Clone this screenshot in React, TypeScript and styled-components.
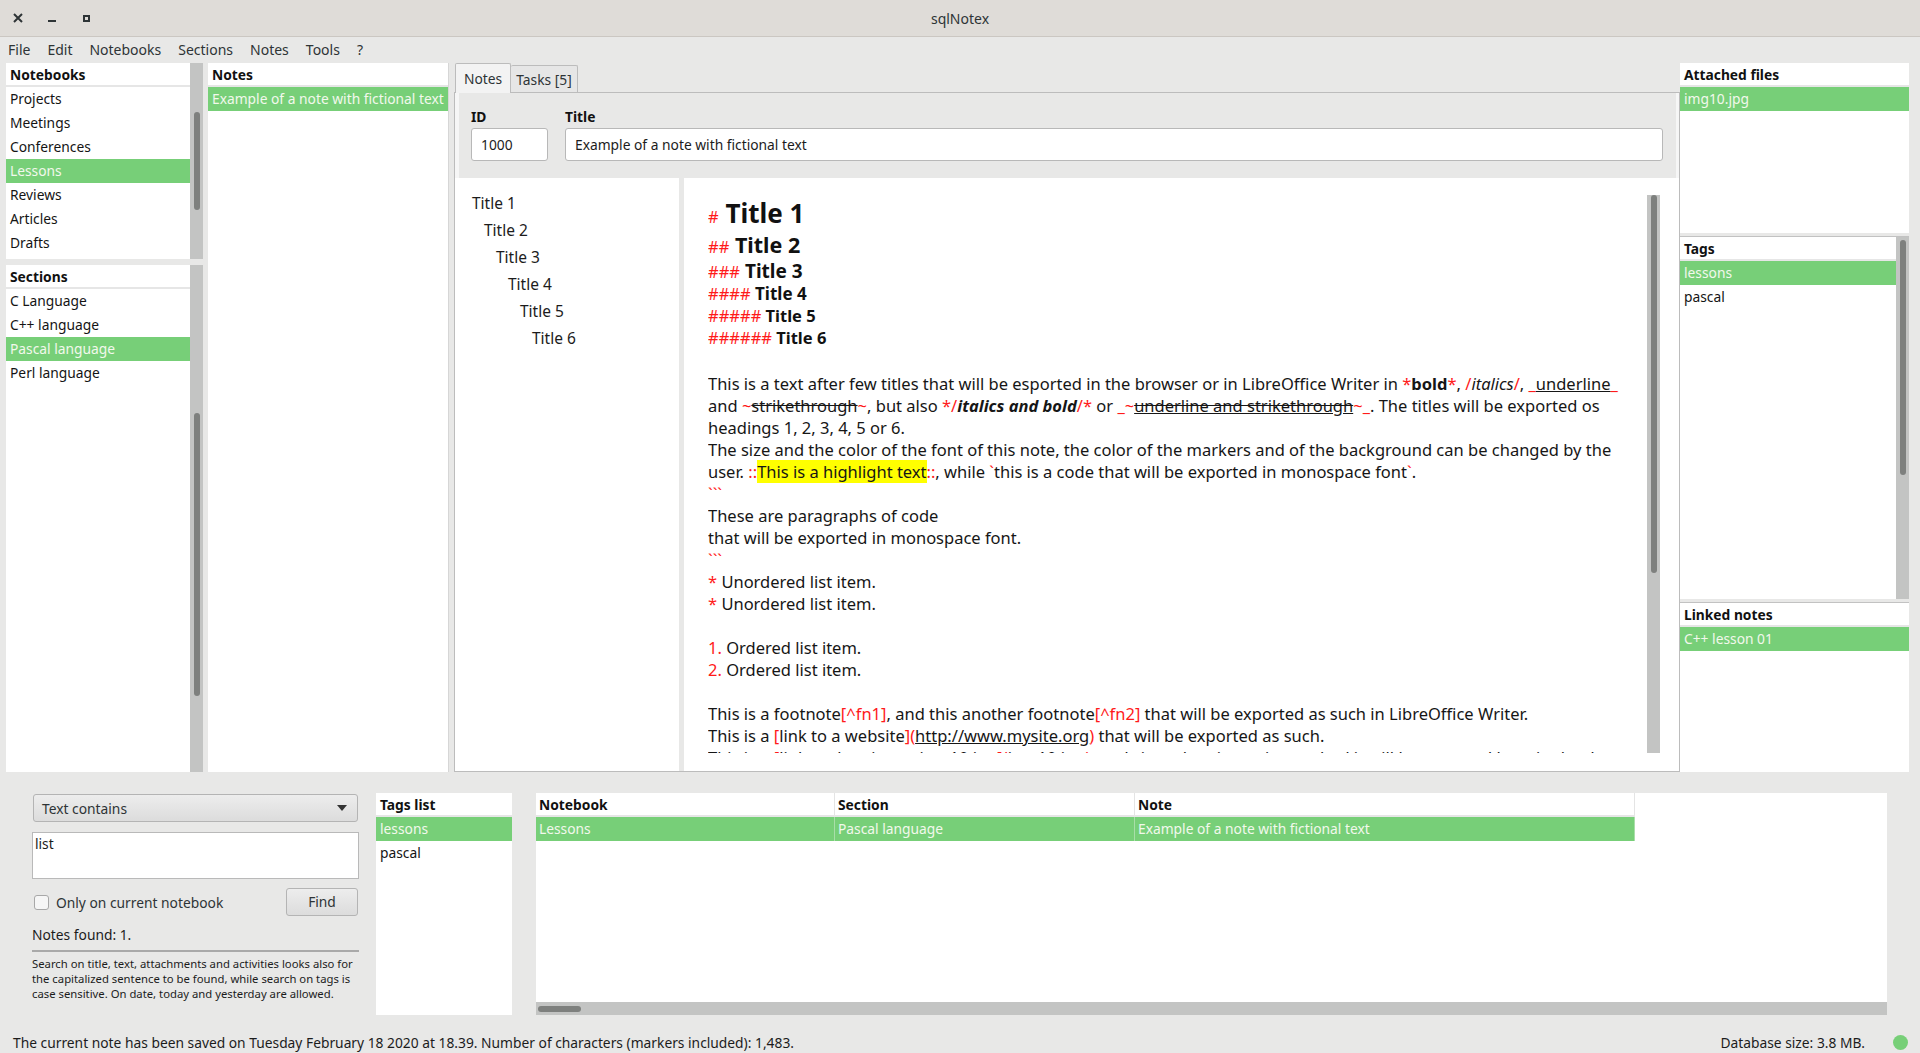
import React from "react";
import styled, { createGlobalStyle, css } from "styled-components";

const GREEN = "#77cf78";
const ON_GREEN = "#f2f8ec";
const RED = "#ff1a1a";

const GlobalStyle = createGlobalStyle`
  html, body {
    margin: 0;
    padding: 0;
  }
  body {
    font-family: "Noto Sans", "Open Sans", sans-serif;
    font-size: 13.8px;
    color: #1c1c1c;
    background: #e8e8e7;
  }
  * {
    box-sizing: border-box;
  }
`;

const menus = ["File", "Edit", "Notebooks", "Sections", "Notes", "Tools", "?"];
const notebooks = ["Projects", "Meetings", "Conferences", "Lessons", "Reviews", "Articles", "Drafts"];
const sections = ["C Language", "C++ language", "Pascal language", "Perl language"];
const outline = ["Title 1", "Title 2", "Title 3", "Title 4", "Title 5", "Title 6"];

type Thumb = { top: number; size: number };

type ListPanelProps = {
  title: string;
  items: string[];
  selected?: string;
  height?: number;
  thumb?: Thumb;
  topLine?: boolean;
};

const ListPanel = ({ title, items, selected, height, thumb, topLine }: ListPanelProps) => (
  <Panel $h={height} $topLine={topLine}>
    <PanelBody>
      <PanelHeader>{title}</PanelHeader>
      {items.map((it) => (
        <Row key={it} $selected={it === selected}>
          {it}
        </Row>
      ))}
    </PanelBody>
    {thumb && (
      <Trough>
        <ThumbBar $top={thumb.top} $size={thumb.size} />
      </Trough>
    )}
  </Panel>
);

const headings: { level: number; size: number; lh: number }[] = [
  { level: 1, size: 26, lh: 36 },
  { level: 2, size: 21.5, lh: 28 },
  { level: 3, size: 19, lh: 24 },
  { level: 4, size: 17, lh: 22 },
  { level: 5, size: 16.5, lh: 22 },
  { level: 6, size: 16.5, lh: 22 },
];

export default function App() {
  return (
    <>
      <GlobalStyle />
      <Window>
        <TitleBar>
          <WindowControls>
            <CtlButton>
              <svg width="10" height="10" viewBox="0 0 10 10">
                <path d="M1 1L9 9M9 1L1 9" stroke="#2e3436" strokeWidth="2" />
              </svg>
            </CtlButton>
            <CtlButton>
              <svg width="8" height="10" viewBox="0 0 8 10">
                <path d="M0 8H8" stroke="#2e3436" strokeWidth="2" />
              </svg>
            </CtlButton>
            <CtlButton>
              <svg width="7" height="7" viewBox="0 0 7 7">
                <rect x="1" y="1" width="5" height="5" fill="none" stroke="#2e3436" strokeWidth="2" />
              </svg>
            </CtlButton>
          </WindowControls>
          <WindowTitle>sqlNotex</WindowTitle>
          <span />
        </TitleBar>

        <MenuBar>
          {menus.map((m) => (
            <MenuItem key={m}>{m}</MenuItem>
          ))}
        </MenuBar>

        <TopArea>
          <LeftColumn>
            <ListPanel title="Notebooks" items={notebooks} selected="Lessons" height={196} thumb={{ top: 49, size: 98 }} />
            <ListPanel title="Sections" items={sections} selected="Pascal language" thumb={{ top: 148, size: 283 }} />
          </LeftColumn>

          <NotesPanel>
            <PanelBody>
              <PanelHeader>Notes</PanelHeader>
              <Row $selected>Example of a note with fictional text</Row>
            </PanelBody>
          </NotesPanel>

          <TabWidget>
            <TabBar>
              <Tab $active>Notes</Tab>
              <Tab>Tasks [5]</Tab>
            </TabBar>
            <TabPane>
              <FormArea>
                <Field $w={77}>
                  <FieldLabel>ID</FieldLabel>
                  <Input>1000</Input>
                </Field>
                <Field>
                  <FieldLabel>Title</FieldLabel>
                  <Input>Example of a note with fictional text</Input>
                </Field>
              </FormArea>
              <ContentRow>
                <Outline>
                  {outline.map((t, i) => (
                    <OutlineItem key={t} $level={i}>
                      {t}
                    </OutlineItem>
                  ))}
                </Outline>
                <Splitter />
                <Editor>
                  <EditorText>
                    {headings.map((h) => (
                      <Heading key={h.level} $size={h.size} $lh={h.lh}>
                        <HashMark>{"#".repeat(h.level)}</HashMark> Title {h.level}
                      </Heading>
                    ))}
                    <Blank $h={24} />
                    <Line>
                      This is a text after few titles that will be esported in the browser or in LibreOffice Writer in{" "}
                      <Mk>*</Mk>
                      <Bold>bold</Bold>
                      <Mk>*</Mk>, <Mk>/</Mk>
                      <Ital>italics</Ital>
                      <Mk>/</Mk>, <Mk>_</Mk>
                      <Deco $u>underline</Deco>
                      <Mk>_</Mk>
                    </Line>
                    <Line>
                      and <Mk>~</Mk>
                      <Deco $s>strikethrough</Deco>
                      <Mk>~</Mk>, but also <Mk>*/</Mk>
                      <BoldItal>italics and bold</BoldItal>
                      <Mk>/*</Mk> or <Mk>_~</Mk>
                      <Deco $u $s>underline and strikethrough</Deco>
                      <Mk>~_</Mk>. The titles will be exported os
                    </Line>
                    <Line>headings 1, 2, 3, 4, 5 or 6.</Line>
                    <Line>
                      The size and the color of the font of this note, the color of the markers and of the background can be
                      changed by the
                    </Line>
                    <Line>
                      user. <Mk>::</Mk>
                      <Highlight>This is a highlight text</Highlight>
                      <Mk>::</Mk>, while <Mk>`</Mk>this is a code that will be exported in monospace font<Mk>`</Mk>.
                    </Line>
                    <Line>
                      <Mk>```</Mk>
                    </Line>
                    <Line>These are paragraphs of code</Line>
                    <Line>that will be exported in monospace font.</Line>
                    <Line>
                      <Mk>```</Mk>
                    </Line>
                    <Line>
                      <Mk>*</Mk> Unordered list item.
                    </Line>
                    <Line>
                      <Mk>*</Mk> Unordered list item.
                    </Line>
                    <Blank $h={22} />
                    <Line>
                      <Mk>1.</Mk> Ordered list item.
                    </Line>
                    <Line>
                      <Mk>2.</Mk> Ordered list item.
                    </Line>
                    <Blank $h={22} />
                    <Line>
                      This is a footnote<Mk>[^fn1]</Mk>, and this another footnote<Mk>[^fn2]</Mk> that will be exported as
                      such in LibreOffice Writer.
                    </Line>
                    <Line>
                      This is a <Mk>[</Mk>link to a website<Mk>](</Mk>
                      <Deco $u>http://www.mysite.org</Deco>
                      <Mk>)</Mk> that will be exported as such.
                    </Line>
                    <Line>
                      This is a <Mk>[</Mk>link to the picture img10.jpg<Mk>](</Mk>img10.jpg<Mk>)</Mk>, and since the
                      picture is attached it will be exported here in the document.
                    </Line>
                  </EditorText>
                  <Trough>
                    <ThumbBar $top={0} $size={378} />
                  </Trough>
                </Editor>
              </ContentRow>
            </TabPane>
          </TabWidget>

          <RightColumn>
            <ListPanel title="Attached files" items={["img10.jpg"]} selected="img10.jpg" height={170} />
            <ListPanel
              title="Tags"
              items={["lessons", "pascal"]}
              selected="lessons"
              height={363}
              topLine
              thumb={{ top: 3, size: 235 }}
            />
            <ListPanel title="Linked notes" items={["C++ lesson 01"]} selected="C++ lesson 01" topLine />
          </RightColumn>
        </TopArea>

        <BottomArea>
          <SearchRow>
            <SearchPanel>
              <Combo>
                <span>Text contains</span>
                <svg width="10" height="6" viewBox="0 0 10 6">
                  <path d="M0 0H10L5 6Z" fill="#333" />
                </svg>
              </Combo>
              <SearchBox>list</SearchBox>
              <OptionsRow>
                <CheckLabel>
                  <CheckBox />
                  Only on current notebook
                </CheckLabel>
                <Button>Find</Button>
              </OptionsRow>
              <FoundText>Notes found: 1.</FoundText>
              <Divider />
              <HelpText>
                Search on title, text, attachments and activities looks also for
                <br />
                the capitalized sentence to be found, while search on tags is
                <br />
                case sensitive. On date, today and yesterday are allowed.
              </HelpText>
            </SearchPanel>

            <TagsList>
              <PanelHeader>Tags list</PanelHeader>
              <Row $selected>lessons</Row>
              <Row>pascal</Row>
            </TagsList>

            <ResultsTable>
              <TableHead>
                <HeadCell $w={299}>Notebook</HeadCell>
                <HeadCell $w={300}>Section</HeadCell>
                <HeadCell $w={500}>Note</HeadCell>
              </TableHead>
              <TableRow>
                <Cell $w={299}>Lessons</Cell>
                <Cell $w={300}>Pascal language</Cell>
                <Cell $w={500}>Example of a note with fictional text</Cell>
              </TableRow>
              <TableBody />
              <HTrough>
                <HThumb $w={43} />
              </HTrough>
            </ResultsTable>
          </SearchRow>

          <StatusBar>
            <span>
              The current note has been saved on Tuesday February 18 2020 at 18.39. Number of characters (markers
              included): 1,483.
            </span>
            <StatusRight>
              Database size: 3.8 MB.
              <StatusDot />
            </StatusRight>
          </StatusBar>
        </BottomArea>
      </Window>
    </>
  );
}

/* ---------- window chrome ---------- */

const Window = styled.div`
  width: 1920px;
  height: 1053px;
  display: flex;
  flex-direction: column;
  overflow: hidden;
  background: #e8e8e7;
`;

const TitleBar = styled.header`
  height: 37px;
  flex: none;
  display: grid;
  grid-template-columns: 200px 1fr 200px;
  align-items: center;
  background: #dfdcd8;
  border-bottom: 1px solid #cbc7c2;
`;

const WindowControls = styled.div`
  display: flex;
  padding-left: 1px;
`;

const CtlButton = styled.div`
  width: 34px;
  height: 34px;
  display: flex;
  align-items: center;
  justify-content: center;
`;

const WindowTitle = styled.div`
  text-align: center;
  color: #2e3436;
  font-size: 14px;
`;

const MenuBar = styled.nav`
  height: 26px;
  flex: none;
  display: flex;
  align-items: center;
  gap: 17px;
  padding-left: 8px;
  color: #2e3436;
`;

const MenuItem = styled.span`
  font-size: 14px;
  line-height: 26px;
`;

/* ---------- panels ---------- */

const TopArea = styled.main`
  height: 709px;
  flex: none;
  display: flex;
  padding: 0 11px 0 6px;
`;

const LeftColumn = styled.div`
  width: 197px;
  flex: none;
  margin-right: 5px;
  display: flex;
  flex-direction: column;
  gap: 6px;
`;

const RightColumn = styled.div`
  width: 229px;
  flex: none;
  display: flex;
  flex-direction: column;
  gap: 3px;
`;

const Panel = styled.section<{ $h?: number; $topLine?: boolean }>`
  display: flex;
  background: #fff;
  ${(p) => (p.$h ? `height: ${p.$h}px; flex: none;` : `flex: 1; min-height: 0;`)}
  ${(p) => p.$topLine && `border-top: 1px solid #c2c2c2;`}
`;

const PanelBody = styled.div`
  flex: 1;
  min-width: 0;
  display: flex;
  flex-direction: column;
`;

const PanelHeader = styled.div`
  height: 24px;
  flex: none;
  padding: 2px 4px 0;
  line-height: 20px;
  font-weight: 700;
  border-bottom: 2px solid #e6e6e6;
  color: #111;
`;

const Row = styled.div<{ $selected?: boolean }>`
  height: 24px;
  flex: none;
  line-height: 24px;
  padding: 0 4px;
  white-space: nowrap;
  overflow: hidden;
  color: #141414;
  ${(p) =>
    p.$selected &&
    css`
      background: ${GREEN};
      color: ${ON_GREEN};
    `}
`;

const Trough = styled.div`
  width: 13px;
  flex: none;
  background: #c3c4c3;
  display: flex;
  flex-direction: column;
  align-items: center;
`;

const ThumbBar = styled.div<{ $top: number; $size: number }>`
  width: 6px;
  border-radius: 3px;
  background: #7e807e;
  margin-top: ${(p) => p.$top}px;
  height: ${(p) => p.$size}px;
`;

const NotesPanel = styled.section`
  width: 241px;
  flex: none;
  margin-right: 5px;
  display: flex;
  background: #fff;
  border-right: 1px solid #d6d6d6;
`;

/* ---------- tabs / editor ---------- */

const TabWidget = styled.section`
  flex: 1;
  min-width: 0;
  display: flex;
  flex-direction: column;
`;

const TabBar = styled.div`
  height: 30px;
  flex: none;
  display: flex;
  align-items: flex-end;
  padding-left: 1px;
  border-bottom: 1px solid #bcbcbc;
`;

const Tab = styled.div<{ $active?: boolean }>`
  height: ${(p) => (p.$active ? 30 : 27)}px;
  padding: 0 ${(p) => (p.$active ? 8 : 5)}px;
  line-height: ${(p) => (p.$active ? 29 : 27)}px;
  border: 1px solid #bcbcbc;
  border-bottom: none;
  border-radius: 2px 2px 0 0;
  color: #2e3436;
  background: ${(p) => (p.$active ? "#f3f3f3" : "#e6e6e6")};
  margin-bottom: ${(p) => (p.$active ? -1 : 0)}px;
  ${(p) => !p.$active && `border-left: none;`}
`;

const TabPane = styled.div`
  flex: 1;
  min-height: 0;
  display: flex;
  flex-direction: column;
  background: #f6f6f6;
  border: 1px solid #bcbcbc;
  border-top: none;
`;

const FormArea = styled.div`
  height: 85px;
  flex: none;
  margin: 0 3px 0 4px;
  padding: 14px 13px 0 12px;
  background: #e8e8e7;
  display: flex;
  gap: 17px;
`;

const Field = styled.div<{ $w?: number }>`
  display: flex;
  flex-direction: column;
  ${(p) => (p.$w ? `width: ${p.$w}px; flex: none;` : `flex: 1;`)}
`;

const FieldLabel = styled.div`
  line-height: 20px;
  margin-bottom: 1px;
  font-weight: 700;
  color: #111;
`;

const Input = styled.div`
  height: 33px;
  line-height: 31px;
  padding: 0 9px;
  background: #fff;
  border: 1px solid #b8b8b8;
  border-radius: 3px;
  white-space: nowrap;
  overflow: hidden;
`;

const ContentRow = styled.div`
  flex: 1;
  min-height: 0;
  display: flex;
`;

const Outline = styled.div`
  width: 224px;
  flex: none;
  background: #fff;
  padding: 12px 0 0 17px;
`;

const OutlineItem = styled.div<{ $level: number }>`
  line-height: 27px;
  font-size: 15.5px;
  padding-left: ${(p) => p.$level * 12}px;
`;

const Splitter = styled.div`
  width: 5px;
  flex: none;
  background: #e8e8e7;
`;

const Editor = styled.div`
  flex: 1;
  min-width: 0;
  display: flex;
  background: #fff;
  padding: 17px 19px 18px 24px;
`;

const EditorText = styled.div`
  flex: 1;
  min-width: 0;
  overflow: hidden;
  font-size: 16.5px;
  color: #161616;
`;

const Heading = styled.div<{ $size: number; $lh: number }>`
  height: ${(p) => p.$lh}px;
  font-size: ${(p) => p.$size}px;
  line-height: ${(p) => p.$lh}px;
  font-weight: 700;
  white-space: nowrap;
  color: #111;
`;

const HashMark = styled.span`
  font-size: 16.5px;
  line-height: 1;
  font-weight: 400;
  color: ${RED};
`;

const Line = styled.div`
  height: 22px;
  line-height: 22px;
  white-space: nowrap;
`;

const Blank = styled.div<{ $h: number }>`
  height: ${(p) => p.$h}px;
`;

const Mk = styled.span`
  color: ${RED};
`;

const Bold = styled.span`
  font-weight: 700;
`;

const Ital = styled.span`
  font-style: italic;
`;

const BoldItal = styled.span`
  font-weight: 700;
  font-style: italic;
`;

const Deco = styled.span<{ $u?: boolean; $s?: boolean }>`
  text-decoration: ${(p) => [p.$u && "underline", p.$s && "line-through"].filter(Boolean).join(" ")};
`;

const Highlight = styled.span`
  background: #ffff00;
`;

/* ---------- bottom search area ---------- */

const BottomArea = styled.footer`
  flex: 1;
  display: flex;
  flex-direction: column;
  padding-top: 21px;
`;

const SearchRow = styled.div`
  height: 222px;
  flex: none;
  display: flex;
  padding-left: 32px;
`;

const SearchPanel = styled.div`
  width: 327px;
  flex: none;
  margin-right: 17px;
  display: flex;
  flex-direction: column;
`;

const Combo = styled.div`
  height: 28px;
  margin: 1px 1px 0;
  padding: 0 10px 0 8px;
  display: flex;
  align-items: center;
  justify-content: space-between;
  border: 1px solid #b4b4b4;
  border-radius: 3px;
  background: linear-gradient(#ededed, #dcdcdc);
  color: #2e3436;
`;

const SearchBox = styled.div`
  height: 47px;
  margin-top: 10px;
  padding: 1px 2px;
  line-height: 20px;
  background: #fff;
  border: 1px solid #b9b9b9;
`;

const OptionsRow = styled.div`
  height: 28px;
  margin-top: 9px;
  display: flex;
  align-items: center;
  justify-content: space-between;
`;

const CheckLabel = styled.label`
  display: flex;
  align-items: center;
  gap: 7px;
  padding-left: 2px;
  color: #2e3436;
`;

const CheckBox = styled.span`
  width: 15px;
  height: 15px;
  border: 1px solid #a8a8a8;
  border-radius: 3px;
  background: #f6f6f6;
`;

const Button = styled.div`
  width: 72px;
  height: 28px;
  margin-right: 1px;
  line-height: 26px;
  text-align: center;
  border: 1px solid #b4b4b4;
  border-radius: 3px;
  background: linear-gradient(#ededed, #dcdcdc);
  color: #2e3436;
`;

const FoundText = styled.div`
  margin-top: 11px;
  line-height: 16px;
`;

const Divider = styled.div`
  height: 2px;
  margin-top: 7px;
  background: #a9a9a9;
`;

const HelpText = styled.div`
  margin-top: 4px;
  font-size: 11.3px;
  line-height: 15px;
  white-space: nowrap;
`;

const TagsList = styled.div`
  width: 136px;
  flex: none;
  margin-right: 24px;
  display: flex;
  flex-direction: column;
  background: #fff;
`;

const ResultsTable = styled.div`
  width: 1351px;
  flex: none;
  display: flex;
  flex-direction: column;
  align-items: flex-start;
  background: #fff;
`;

const TableHead = styled.div`
  height: 24px;
  display: flex;
  border-bottom: 2px solid #e6e6e6;
`;

const HeadCell = styled.div<{ $w: number }>`
  width: ${(p) => p.$w}px;
  padding: 2px 3px 0;
  line-height: 20px;
  font-weight: 700;
  color: #111;
  border-right: 1px solid #e4e4e4;
`;

const TableRow = styled.div`
  height: 24px;
  display: flex;
`;

const Cell = styled.div<{ $w: number }>`
  width: ${(p) => p.$w}px;
  padding: 0 3px;
  line-height: 24px;
  background: ${GREEN};
  color: ${ON_GREEN};
  border-right: 1px solid #a9dea9;
  white-space: nowrap;
`;

const TableBody = styled.div`
  flex: 1;
`;

const HTrough = styled.div`
  height: 13px;
  flex: none;
  align-self: stretch;
  display: flex;
  align-items: center;
  padding-left: 2px;
  background: #c3c4c3;
`;

const HThumb = styled.div<{ $w: number }>`
  width: ${(p) => p.$w}px;
  height: 6px;
  border-radius: 3px;
  background: #7e807e;
`;

const StatusBar = styled.div`
  height: 22px;
  margin-top: auto;
  display: flex;
  align-items: center;
  justify-content: space-between;
  padding: 0 12px 0 13px;
  white-space: nowrap;
`;

const StatusRight = styled.div`
  display: flex;
  align-items: center;
`;

const StatusDot = styled.span`
  width: 15px;
  height: 15px;
  margin-left: 28px;
  border-radius: 50%;
  background: ${GREEN};
`;
